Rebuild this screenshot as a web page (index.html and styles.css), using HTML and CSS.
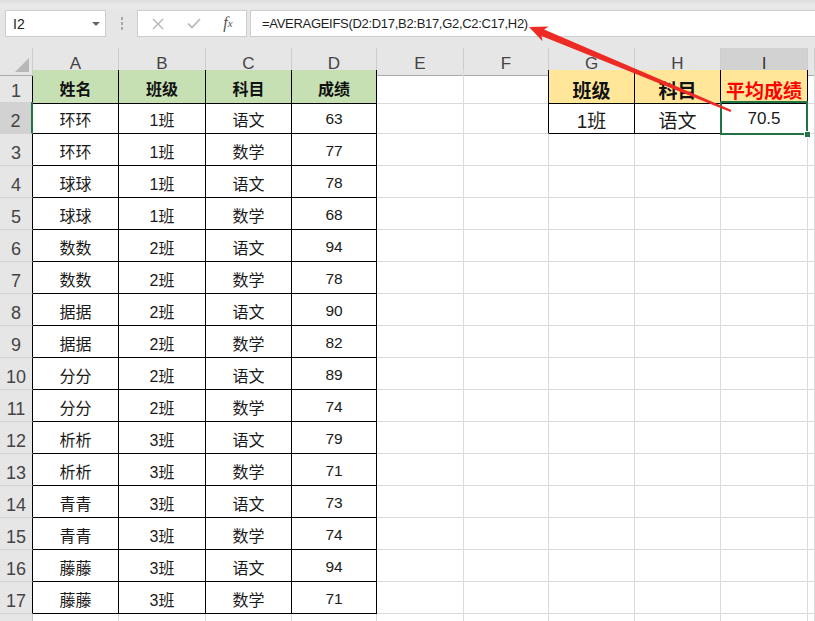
FILE: index.html
```html
<!DOCTYPE html>
<html lang="zh-CN">
<head>
<meta charset="utf-8">
<title>AVERAGEIFS</title>
<link rel="stylesheet" href="styles.css">
</head>
<body>
<div class="toolbar">
  <div class="namebox"><span>I2</span><span class="caret"></span></div>
  <div class="grip"><i></i><i></i><i></i></div>
  <div class="fxbox">
    <span class="btn b1"><svg width="12" height="12" viewBox="0 0 12 12"><path d="M1 1L11 11M11 1L1 11" stroke="#b4b4b4" stroke-width="1.4" fill="none"/></svg></span>
    <span class="btn b2"><svg width="14" height="11" viewBox="0 0 14 11"><path d="M1 5.5L5 9.5L13 1" stroke="#b4b4b4" stroke-width="1.6" fill="none"/></svg></span>
    <span class="btn b3 fx">f<sub>x</sub></span>
  </div>
  <div class="formula">=AVERAGEIFS(D2:D17,B2:B17,G2,C2:C17,H2)</div>
</div>

<div class="sheet">
  <div class="row head">
    <div class="cell corner"><svg class="tri" width="16" height="16" viewBox="0 0 16 16"><path d="M15 1L15 15L1 15Z" fill="#b8b8b8"/></svg></div>
    <div class="cell ch tb">A</div><div class="cell ch tb">B</div><div class="cell ch tb">C</div><div class="cell ch tb">D</div>
    <div class="cell ch">E</div><div class="cell ch">F</div>
    <div class="cell ch tb">G</div><div class="cell ch tb">H</div><div class="cell ch on">I</div>
    <div class="cell ch"></div>
  </div>

  <div class="row">
    <div class="cell rh">1</div>
    <div class="cell t hg">姓名</div><div class="cell t hg">班级</div><div class="cell t hg">科目</div><div class="cell t hg">成绩</div>
    <div class="cell"></div><div class="cell tl"></div>
    <div class="cell t hy">班级</div><div class="cell t hy">科目</div><div class="cell t hy red">平均成绩</div>
    <div class="cell"></div>
  </div>
  <div class="row">
    <div class="cell rh on">2</div>
    <div class="cell t">环环</div><div class="cell t">1班</div><div class="cell t">语文</div><div class="cell t n">63</div>
    <div class="cell"></div><div class="cell tl"></div>
    <div class="cell t big">1班</div><div class="cell t big">语文</div><div class="cell t num17 active">70.5<span class="sel"><span class="handle"></span></span></div>
    <div class="cell"></div>
  </div>
  <div class="row"><div class="cell rh">3</div><div class="cell t">环环</div><div class="cell t">1班</div><div class="cell t">数学</div><div class="cell t n">77</div><div class="cell"></div><div class="cell"></div><div class="cell"></div><div class="cell"></div><div class="cell"></div><div class="cell"></div></div>
  <div class="row"><div class="cell rh">4</div><div class="cell t">球球</div><div class="cell t">1班</div><div class="cell t">语文</div><div class="cell t n">78</div><div class="cell"></div><div class="cell"></div><div class="cell"></div><div class="cell"></div><div class="cell"></div><div class="cell"></div></div>
  <div class="row"><div class="cell rh">5</div><div class="cell t">球球</div><div class="cell t">1班</div><div class="cell t">数学</div><div class="cell t n">68</div><div class="cell"></div><div class="cell"></div><div class="cell"></div><div class="cell"></div><div class="cell"></div><div class="cell"></div></div>
  <div class="row"><div class="cell rh">6</div><div class="cell t">数数</div><div class="cell t">2班</div><div class="cell t">语文</div><div class="cell t n">94</div><div class="cell"></div><div class="cell"></div><div class="cell"></div><div class="cell"></div><div class="cell"></div><div class="cell"></div></div>
  <div class="row"><div class="cell rh">7</div><div class="cell t">数数</div><div class="cell t">2班</div><div class="cell t">数学</div><div class="cell t n">78</div><div class="cell"></div><div class="cell"></div><div class="cell"></div><div class="cell"></div><div class="cell"></div><div class="cell"></div></div>
  <div class="row"><div class="cell rh">8</div><div class="cell t">据据</div><div class="cell t">2班</div><div class="cell t">语文</div><div class="cell t n">90</div><div class="cell"></div><div class="cell"></div><div class="cell"></div><div class="cell"></div><div class="cell"></div><div class="cell"></div></div>
  <div class="row"><div class="cell rh">9</div><div class="cell t">据据</div><div class="cell t">2班</div><div class="cell t">数学</div><div class="cell t n">82</div><div class="cell"></div><div class="cell"></div><div class="cell"></div><div class="cell"></div><div class="cell"></div><div class="cell"></div></div>
  <div class="row"><div class="cell rh">10</div><div class="cell t">分分</div><div class="cell t">2班</div><div class="cell t">语文</div><div class="cell t n">89</div><div class="cell"></div><div class="cell"></div><div class="cell"></div><div class="cell"></div><div class="cell"></div><div class="cell"></div></div>
  <div class="row"><div class="cell rh">11</div><div class="cell t">分分</div><div class="cell t">2班</div><div class="cell t">数学</div><div class="cell t n">74</div><div class="cell"></div><div class="cell"></div><div class="cell"></div><div class="cell"></div><div class="cell"></div><div class="cell"></div></div>
  <div class="row"><div class="cell rh">12</div><div class="cell t">析析</div><div class="cell t">3班</div><div class="cell t">语文</div><div class="cell t n">79</div><div class="cell"></div><div class="cell"></div><div class="cell"></div><div class="cell"></div><div class="cell"></div><div class="cell"></div></div>
  <div class="row"><div class="cell rh">13</div><div class="cell t">析析</div><div class="cell t">3班</div><div class="cell t">数学</div><div class="cell t n">71</div><div class="cell"></div><div class="cell"></div><div class="cell"></div><div class="cell"></div><div class="cell"></div><div class="cell"></div></div>
  <div class="row"><div class="cell rh">14</div><div class="cell t">青青</div><div class="cell t">3班</div><div class="cell t">语文</div><div class="cell t n">73</div><div class="cell"></div><div class="cell"></div><div class="cell"></div><div class="cell"></div><div class="cell"></div><div class="cell"></div></div>
  <div class="row"><div class="cell rh">15</div><div class="cell t">青青</div><div class="cell t">3班</div><div class="cell t">数学</div><div class="cell t n">74</div><div class="cell"></div><div class="cell"></div><div class="cell"></div><div class="cell"></div><div class="cell"></div><div class="cell"></div></div>
  <div class="row"><div class="cell rh">16</div><div class="cell t">藤藤</div><div class="cell t">3班</div><div class="cell t">语文</div><div class="cell t n">94</div><div class="cell"></div><div class="cell"></div><div class="cell"></div><div class="cell"></div><div class="cell"></div><div class="cell"></div></div>
  <div class="row"><div class="cell rh">17</div><div class="cell t">藤藤</div><div class="cell t">3班</div><div class="cell t">数学</div><div class="cell t n">71</div><div class="cell"></div><div class="cell"></div><div class="cell"></div><div class="cell"></div><div class="cell"></div><div class="cell"></div></div>
  <div class="row"><div class="cell rh plain"></div><div class="cell"></div><div class="cell"></div><div class="cell"></div><div class="cell"></div><div class="cell"></div><div class="cell"></div><div class="cell"></div><div class="cell"></div><div class="cell"></div><div class="cell"></div></div>
</div>

<svg class="arrow" width="815" height="621" viewBox="0 0 815 621">
  <polygon points="529,27 548.7,26.5 544.1,29.6 731.5,109.9 730.5,112.1 541.5,36 542.5,41.3" fill="#ee2a24"/>
</svg>
</body>
</html>
```

FILE: styles.css
```css
* {
  box-sizing: border-box;
  margin: 0;
  padding: 0;
}

body {
  width: 815px;
  height: 621px;
  overflow: hidden;
  position: relative;
  background: #ffffff;
  font-family: "Liberation Sans", "Noto Sans CJK SC", sans-serif;
}

/* ---------- formula toolbar ---------- */
.toolbar {
  height: 48px;
  display: flex;
  align-items: flex-start;
  padding: 10px 0 0 5px;
  background: linear-gradient(to bottom, #dedede 0, #ebebeb 6px, #e6e6e6 10px, #e6e6e6 100%);
}

.namebox {
  width: 101px;
  height: 27px;
  display: flex;
  align-items: center;
  justify-content: space-between;
  padding: 1px 5px 0 7px;
  background: #ffffff;
  border: 1px solid #cdcdcd;
  font-size: 14px;
  color: #222;
}

.caret {
  width: 0;
  height: 0;
  border-left: 4px solid transparent;
  border-right: 4px solid transparent;
  border-top: 4px solid #666;
}

.grip {
  width: 31px;
  height: 27px;
  display: flex;
  flex-direction: column;
  align-items: center;
  justify-content: center;
  gap: 2px;
}

.grip i {
  display: block;
  width: 2px;
  height: 3px;
  background: #a8a8a8;
}

.fxbox {
  width: 110px;
  height: 27px;
  display: flex;
  align-items: center;
  background: #ffffff;
  border: 1px solid #cdcdcd;
}

.btn {
  display: flex;
  align-items: center;
  justify-content: center;
  height: 25px;
}

.b1 { width: 39px; }
.b2 { width: 33px; }
.b3 { width: 36px; }

.fx {
  font-family: "Liberation Serif", serif;
  font-style: italic;
  font-size: 16px;
  color: #555;
  padding-bottom: 2px;
}

.fx sub {
  font-size: 11px;
  vertical-align: -1px;
}

.formula {
  flex: 1;
  height: 27px;
  margin-left: 3px;
  padding: 3px 0 0 11px;
  background: #ffffff;
  border: 1px solid #cdcdcd;
  border-right: none;
  font-size: 13px;
  letter-spacing: -0.3px;
  line-height: 20px;
  color: #1e1e1e;
  white-space: nowrap;
}

/* ---------- sheet ---------- */
.row {
  display: grid;
  grid-template-columns: 33px 86px 87px 86px 85px 87px 85px 86px 86px 87px 1fr;
  height: 32px;
}

.row.head {
  height: 22px;
}

.cell {
  display: flex;
  align-items: center;
  justify-content: center;
  padding-top: 3px;
  border-right: 1px solid #dadada;
  border-bottom: 1px solid #dadada;
  font-size: 16px;
  color: #1a1a1a;
  white-space: nowrap;
}

.cell.n {
  font-size: 15.5px;
}

.corner {
  position: relative;
  background: #e6e6e6;
  border-right-color: #cdcdcd;
  border-bottom-color: #ababab;
}

.tri {
  position: absolute;
  right: 2px;
  bottom: 2px;
}

.ch {
  background: #e6e6e6;
  border-right-color: #cdcdcd;
  border-bottom-color: #ababab;
  font-size: 17px;
  color: #444;
  padding-top: 4px;
}

.ch.tb {
  border-bottom-color: #000;
}

.ch.on {
  background: #d2d2d2;
  border-bottom: 2px solid #217346;
  color: #333;
  padding-top: 6px;
}

.rh {
  align-items: flex-end;
  padding: 0 0 1px;
  background: #e6e6e6;
  border-right-color: #000;
  border-bottom-color: #d2d2d2;
  font-size: 18px;
  color: #444;
}

.rh.on {
  background: #d2d2d2;
  border-right: 2px solid #217346;
}

.rh.plain {
  border-right-color: #c4c4c4;
}

.t {
  border-right-color: #000;
  border-bottom-color: #000;
}

.tl {
  border-right-color: #000;
}

.hg {
  background: #c6e0b4;
  font-weight: bold;
  font-size: 16px;
  color: #111;
}

.hy {
  background: #ffe699;
  font-weight: bold;
  font-size: 19px;
  color: #111;
  padding-top: 6px;
}

.red {
  color: #ff0000;
}

.big {
  font-size: 19px;
}

.num17 {
  font-size: 17px;
}

.active {
  position: relative;
}

.sel {
  position: absolute;
  left: -1px;
  top: -1px;
  right: -1px;
  bottom: -2px;
  border: 2px solid #217346;
}

.handle {
  position: absolute;
  right: -5px;
  bottom: -5px;
  width: 7px;
  height: 7px;
  background: #217346;
  border: 1px solid #ffffff;
}

/* ---------- annotation arrow ---------- */
.arrow {
  position: absolute;
  left: 0;
  top: 0;
  pointer-events: none;
}
```
